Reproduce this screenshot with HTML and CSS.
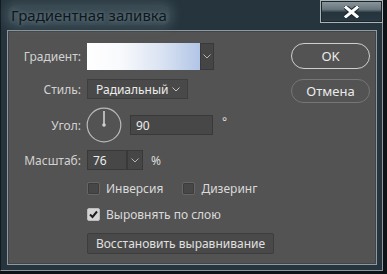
FILE: index.html
```html
<!DOCTYPE html>
<html lang="ru">
<head>
    <meta charset="UTF-8">
    <title>Градиентная заливка</title>
    <link rel="stylesheet" href="styles.css">
</head>
<body>
    <div class="window">
        <div class="titlebar">
            <span class="title">Градиентная заливка</span>
            <div class="close">
                <svg width="15" height="12" viewBox="0 0 15 12">
                    <path d="M2 1.5 L13 10.5 M13 1.5 L2 10.5" stroke="#1c262b" stroke-width="5" stroke-linecap="square"/>
                    <path d="M2 1.5 L13 10.5 M13 1.5 L2 10.5" stroke="#fff" stroke-width="3" stroke-linecap="square"/>
                </svg>
            </div>
        </div>

        <div class="panel">
            <div class="form">
                <div class="row row-gradient">
                    <label class="label">Градиент:</label>
                    <div class="gradient-box"></div>
                    <div class="arrow arrow-tall">
                        <svg width="8" height="5" viewBox="0 0 8 5"><polyline points="0.5,0.5 4,4 7.5,0.5" fill="none" stroke="#b5b5b5" stroke-width="1"/></svg>
                    </div>
                </div>

                <div class="row row-style">
                    <label class="label">Стиль:</label>
                    <div class="select">
                        <span>Радиальный</span>
                        <svg width="8" height="5" viewBox="0 0 8 5"><polyline points="0.5,0.5 4,4 7.5,0.5" fill="none" stroke="#c8c8c8" stroke-width="1"/></svg>
                    </div>
                </div>

                <div class="row row-angle">
                    <label class="label">Угол:</label>
                    <svg class="dial" width="36" height="36" viewBox="0 0 36 36">
                        <circle cx="18" cy="18" r="16.8" fill="none" stroke="#b9b9b9" stroke-width="1.2"/>
                        <line x1="18" y1="4" x2="18" y2="18" stroke="#d0d0d0" stroke-width="1.6"/>
                        <circle cx="18" cy="18" r="1.8" fill="#d0d0d0"/>
                    </svg>
                    <div class="input input-angle">90</div>
                    <span class="unit unit-deg">°</span>
                </div>

                <div class="row row-scale">
                    <label class="label">Масштаб:</label>
                    <div class="input input-scale">76</div>
                    <div class="arrow">
                        <svg width="8" height="5" viewBox="0 0 8 5"><polyline points="0.5,0.5 4,4 7.5,0.5" fill="none" stroke="#b5b5b5" stroke-width="1"/></svg>
                    </div>
                    <span class="unit">%</span>
                </div>

                <div class="row row-check">
                    <span class="check"></span>
                    <span class="check-text">Инверсия</span>
                    <span class="check check-second"></span>
                    <span class="check-text">Дизеринг</span>
                </div>

                <div class="row row-check row-check2">
                    <span class="check checked">
                        <svg width="11" height="11" viewBox="0 0 11 11"><polyline points="2,5.5 4.5,8 9,2.5" fill="none" stroke="#1e1e1e" stroke-width="2"/></svg>
                    </span>
                    <span class="check-text">Выровнять по слою</span>
                </div>

                <div class="row row-reset">
                    <button class="reset">Восстановить выравнивание</button>
                </div>
            </div>

            <div class="buttons">
                <button class="btn btn-ok">OK</button>
                <button class="btn btn-cancel">Отмена</button>
            </div>
        </div>
    </div>
</body>
</html>
```

FILE: styles.css
```css
* {
    margin: 0;
    padding: 0;
    box-sizing: border-box;
}

body {
    width: 387px;
    height: 274px;
    overflow: hidden;
    background-color: #0d1317;
    font-family: "Noto Sans", "Open Sans", sans-serif;
    font-size: 12px;
    color: #d6d6d6;
}

.window {
    width: 383px;
    height: 271px;
    background-color: #26353d;
    border-left: 1px solid #111a1f;
    border-right: 1px solid #8e999e;
    border-bottom: 1px solid #8e999e;
}

.titlebar {
    height: 30px;
    display: flex;
    align-items: flex-start;
    justify-content: space-between;
}

.title {
    margin: 5px 0 0 7px;
    padding: 0 3px;
    font-size: 15px;
    color: #0e171c;
    border-radius: 8px;
    background-color: rgba(96, 116, 126, 0.35);
    box-shadow: 0 0 8px 4px rgba(96, 116, 126, 0.35);
    text-shadow: 0 0 5px #7c919b;
}

.close {
    width: 63px;
    height: 23px;
    margin-right: -1px;
    display: flex;
    align-items: center;
    justify-content: center;
    border: 1px solid #a9b3b8;
    box-shadow: inset 0 0 0 1px #1a262c;
    background: linear-gradient(#8d999f 0%, #67757c 40%, #25343c 55%, #2a3a42 100%);
}

.panel {
    width: 370px;
    height: 235px;
    margin-left: 6px;
    display: flex;
    background-color: #535353;
    border: 1px solid #8f999e;
    box-shadow: inset 0 0 0 1px #404648;
}

.form {
    width: 270px;
    padding-top: 11px;
    display: flex;
    flex-direction: column;
}

.row {
    display: flex;
    align-items: center;
}

.label {
    width: 73px;
    margin-right: 6px;
    text-align: right;
    color: #d2d2d2;
}

.row-gradient {
    height: 28px;
}

.gradient-box {
    width: 113px;
    height: 27px;
    background: linear-gradient(to right, #ffffff 0%, #f8f9fc 30%, #dbe4f3 65%, #b1c5e6 100%);
}

.arrow {
    width: 16px;
    height: 20px;
    display: flex;
    align-items: center;
    justify-content: center;
    background-color: #464646;
    border: 1px solid #393939;
}

.arrow-tall {
    width: 14px;
    height: 27px;
    background-color: #454545;
}

.row-style {
    margin-top: 9px;
}

.select {
    width: 101px;
    height: 20px;
    padding: 0 7px 0 8px;
    display: flex;
    align-items: center;
    justify-content: space-between;
    background-color: #494949;
    border: 1px solid #3e3e3e;
    color: #ececec;
}

.row-angle {
    margin-top: 8px;
    height: 36px;
}

.dial {
    margin-left: -1px;
}

.input {
    height: 20px;
    padding-left: 5px;
    display: flex;
    align-items: center;
    background-color: #474747;
    border: 1px solid #393939;
    color: #ececec;
}

.input-angle {
    width: 83px;
    margin-left: 8px;
}

.unit {
    margin-left: 8px;
    color: #dcdcdc;
}

.unit-deg {
    margin-left: 9px;
    align-self: flex-start;
    margin-top: 6px;
}

.row-scale {
    margin-top: 7px;
}

.input-scale {
    width: 40px;
}

.row-check {
    margin-top: 10px;
    height: 16px;
    padding-left: 79px;
}

.row-check2 {
    margin-top: 10px;
}

.check {
    width: 13px;
    height: 13px;
    display: flex;
    align-items: center;
    justify-content: center;
    border-radius: 2px;
    background-color: #474747;
    border: 1px solid #666;
    box-shadow: inset 0 0 0 1px #3c3c3c;
}

.check-second {
    margin-left: 19px;
}

.checked {
    background-color: #d4d4d4;
    border-color: #bcbcbc;
    box-shadow: none;
}

.check-text {
    margin-left: 6px;
    color: #dadada;
}

.row-reset {
    margin-top: 11px;
    padding-left: 79px;
}

.reset {
    width: 187px;
    height: 21px;
    font-family: inherit;
    font-size: 12px;
    color: #e0e0e0;
    background-color: #494949;
    border: 1px solid #3d3d3d;
    border-radius: 2px;
}

.buttons {
    margin-left: auto;
    margin-right: 6px;
    padding-top: 12px;
    display: flex;
    flex-direction: column;
    gap: 10px;
}

.btn {
    width: 79px;
    font-family: inherit;
    font-size: 13px;
    color: #eaeaea;
    background-color: #535353;
    border-radius: 13px;
}

.btn-ok {
    height: 26px;
    border: 1.5px solid #cfcfcf;
}

.btn-cancel {
    height: 24px;
    border: 1.5px solid #767676;
}
```
